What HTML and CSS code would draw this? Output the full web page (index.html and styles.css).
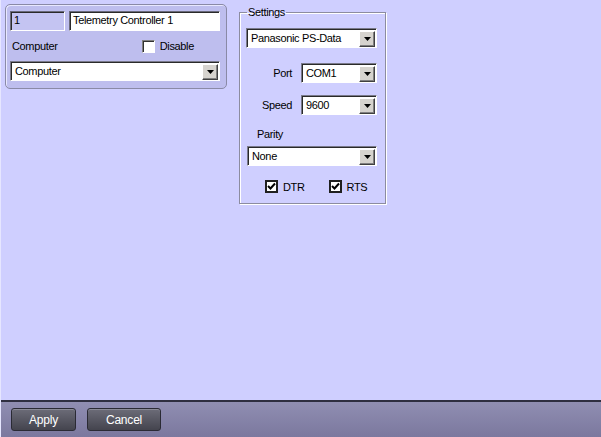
FILE: index.html
```html
<!DOCTYPE html>
<html>
<head>
<meta charset="utf-8">
<link rel="stylesheet" href="styles.css">
</head>
<body>
<div class="main">
  <div class="card">
    <div class="row1">
      <div class="field id-field">1</div>
      <div class="field name-field">Telemetry Controller 1</div>
    </div>
    <div class="row2">
      <span class="lbl">Computer</span>
      <span class="check-wrap"><span class="chk"></span><span class="lbl">Disable</span></span>
    </div>
    <div class="combo wide">
      <span class="combo-text">Computer</span>
      <span class="arrow"><svg width="7" height="4" viewBox="0 0 7 4"><path d="M0 0H7L3.5 4Z" fill="#000"/></svg></span>
    </div>
  </div>

  <fieldset class="settings">
    <legend>Settings</legend>
    <div class="combo proto">
      <span class="combo-text">Panasonic PS-Data</span>
      <span class="arrow"><svg width="7" height="4" viewBox="0 0 7 4"><path d="M0 0H7L3.5 4Z" fill="#000"/></svg></span>
    </div>
    <div class="prow port-row">
      <span class="lbl">Port</span>
      <div class="combo small">
        <span class="combo-text">COM1</span>
        <span class="arrow"><svg width="7" height="4" viewBox="0 0 7 4"><path d="M0 0H7L3.5 4Z" fill="#000"/></svg></span>
      </div>
    </div>
    <div class="prow speed-row">
      <span class="lbl">Speed</span>
      <div class="combo small">
        <span class="combo-text">9600</span>
        <span class="arrow"><svg width="7" height="4" viewBox="0 0 7 4"><path d="M0 0H7L3.5 4Z" fill="#000"/></svg></span>
      </div>
    </div>
    <div class="parity-lbl lbl">Parity</div>
    <div class="combo parity">
      <span class="combo-text">None</span>
      <span class="arrow"><svg width="7" height="4" viewBox="0 0 7 4"><path d="M0 0H7L3.5 4Z" fill="#000"/></svg></span>
    </div>
    <div class="checks">
      <span class="check-wrap"><span class="chk2"><svg width="9" height="9" viewBox="0 0 9 9"><path d="M1 4L3.5 6.5L8 1.5" fill="none" stroke="#000" stroke-width="2"/></svg></span><span class="lbl">DTR</span></span>
      <span class="check-wrap"><span class="chk2"><svg width="9" height="9" viewBox="0 0 9 9"><path d="M1 4L3.5 6.5L8 1.5" fill="none" stroke="#000" stroke-width="2"/></svg></span><span class="lbl">RTS</span></span>
    </div>
  </fieldset>
</div>
<div class="bar">
  <button class="btn apply">Apply</button>
  <button class="btn cancel">Cancel</button>
</div>
</body>
</html>
```

FILE: styles.css
```css
* { box-sizing: border-box; }
html, body { margin: 0; padding: 0; }
body {
  width: 601px;
  height: 437px;
  display: flex;
  flex-direction: column;
  font-family: "Liberation Sans", Arial, sans-serif;
  font-size: 11px;
  letter-spacing: -0.35px;
  color: #000;
  overflow: hidden;
  border-left: 1px solid #e6e6ff;
}
.main {
  height: 400px;
  background: #cfcfff;
  display: flex;
  align-items: flex-start;
  padding: 4px 0 0 4px;
  gap: 12px;
}
.card {
  width: 222px;
  height: 85px;
  background: #bebeee;
  border: 1px solid #8a8aa6;
  border-radius: 5px;
  box-shadow: 1px 1px 0 #e8e8ff inset;
  padding: 6px 0 0 4px;
}
.row1 { display: flex; gap: 4px; }
.field {
  height: 20px;
  line-height: 17px;
  padding-left: 3px;
  border-style: solid;
  border-width: 1px;
  border-color: #6a6a7a #ffffff #ffffff #6a6a7a;
  box-shadow: inset 1px 1px 0 #2a2a2a;
}
.id-field { width: 55px; background: #c4c4f2; }
.name-field { width: 151px; background: #fff; }
.row2 {
  display: flex;
  justify-content: space-between;
  align-items: center;
  height: 20px;
  margin-top: 5px;
  padding: 0 32px 0 2px;
}
.check-wrap { display: inline-flex; align-items: center; gap: 5px; }
.chk {
  width: 13px; height: 13px;
  background: #fff;
  border-style: solid; border-width: 1px;
  border-color: #808080 #fff #fff #808080;
  box-shadow: inset 1px 1px 0 #303030;
}
.combo {
  height: 20px;
  background: #fff;
  border-style: solid; border-width: 1px;
  border-color: #7a7a8a #fff #fff #7a7a8a;
  box-shadow: inset 1px 1px 0 #2a2a2a;
  display: flex;
  align-items: center;
  justify-content: space-between;
  padding: 0 1px 0 4px;
}
.combo.wide { width: 210px; margin-top: 5px; }
.arrow {
  width: 16px; height: 16px;
  background: #d6d3ce;
  border-style: solid; border-width: 1px;
  border-color: #fff #404040 #404040 #fff;
  box-shadow: inset -1px -1px 0 #808080;
  display: flex; align-items: center; justify-content: center;
  margin-top: 1px;
}
.settings {
  margin: 2px 0 0 0;
  width: 147px;
  height: 198px;
  border: 1px solid #8c8ca0;
  box-shadow: inset 1px 1px 0 #fff, 1px 1px 0 #fff;
  padding: 0 0 0 6px;
}
.settings legend { padding: 0 1px; margin-left: 1px; line-height: 12px; }
.combo.proto { width: 131px; margin-top: 10px; }
.prow { display: flex; align-items: center; justify-content: flex-end; width: 131px; }
.prow .combo.small { width: 76px; margin-left: 9px; }
.port-row { margin-top: 15px; }
.speed-row { margin-top: 12px; }
.parity-lbl { margin: 13px 0 0 11px; height: 14px; }
.combo.parity { width: 130px; margin: 4px 0 0 1px; }
.checks { display: flex; gap: 24px; margin: 14px 0 0 19px; }
.chk2 {
  width: 13px; height: 13px;
  background: #fff;
  border: 2px solid #202020;
  display: flex; align-items: center; justify-content: center;
}
.bar {
  height: 37px;
  border-top: 2px solid #2e2e40;
  background: linear-gradient(#908eb2, #7b789e);
  display: flex;
  align-items: center;
  padding: 0 0 0 10px;
  gap: 11px;
}
.btn {
  height: 23px;
  border: 1px solid #2a2a34;
  border-radius: 3px;
  background: linear-gradient(#6c6c78, #44444e);
  color: #fff;
  font-family: "Liberation Sans", Arial, sans-serif;
  font-size: 12px;
  letter-spacing: -0.2px;
  padding: 0;
  box-shadow: inset 0 1px 0 #8a8a96;
}
.apply { width: 65px; }
.cancel { width: 74px; }
```
